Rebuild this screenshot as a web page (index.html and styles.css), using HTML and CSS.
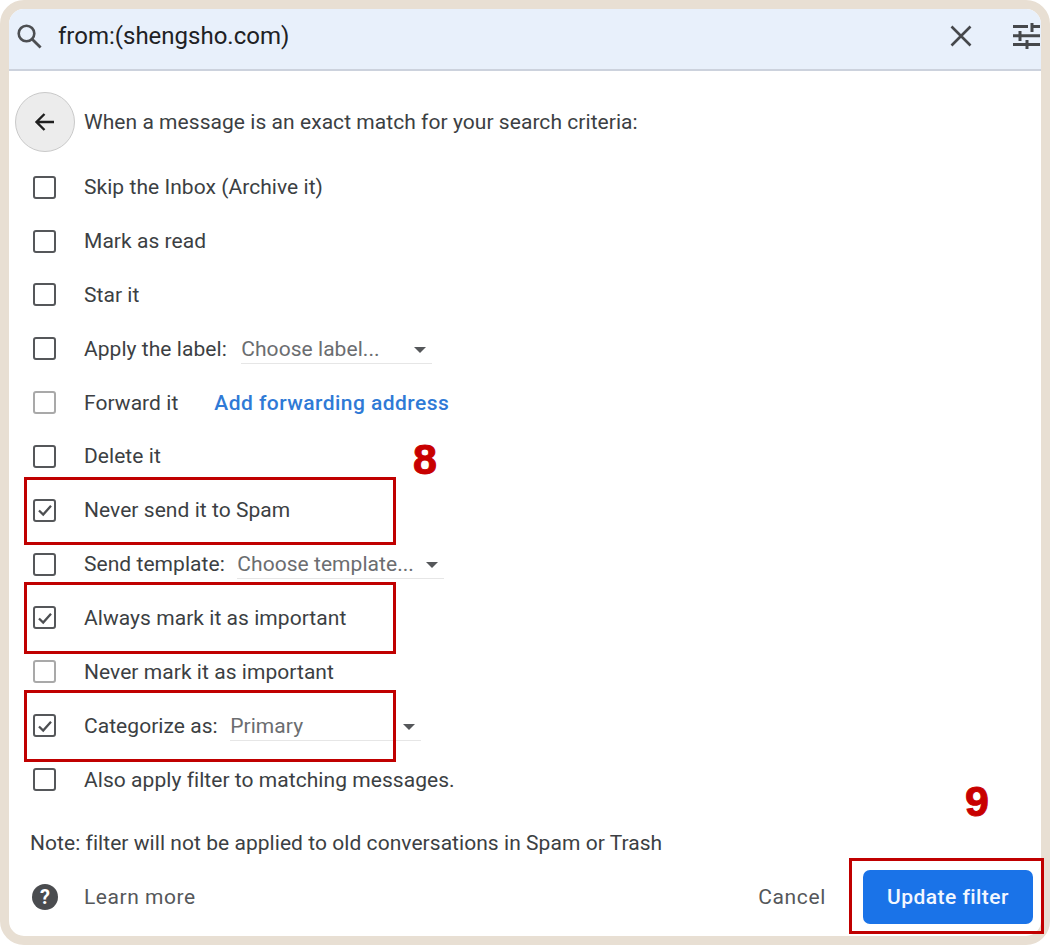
FILE: index.html
```html
<!DOCTYPE html>
<html lang="en">
<head>
<meta charset="utf-8">
<title>Update filter</title>
<link rel="stylesheet" href="styles.css">
</head>
<body>
<div class="page">
  <div class="frame">
    <header class="search">
      <svg class="icon-search" viewBox="0 0 28 28" width="28" height="28"><circle cx="11.5" cy="11.5" r="7.8" fill="none" stroke="#4d4f52" stroke-width="2.6"/><path d="M17.2 17.2 25.6 25.6" stroke="#4d4f52" stroke-width="2.8" fill="none"/></svg>
      <span class="query">from:(shengsho.com)</span>
      <svg class="icon-close" viewBox="0 0 22 22" width="22" height="22"><path d="M1.5 1.5 20.5 20.5M20.5 1.5 1.5 20.5" stroke="#46484b" stroke-width="2.6" fill="none"/></svg>
      <svg class="icon-tune" viewBox="0 0 27 26" width="27" height="26"><path d="M0 3.5H15M19 0V9M19 3.5H27M0 12.7H6M7 8V18M7 12.7H27M0 21.5H14M14 17V26M14 21.5H27" stroke="#46484b" stroke-width="3" fill="none"/></svg>
    </header>
    <div class="heading">
      <span class="back"><svg viewBox="0 0 24 24" width="24" height="24"><path d="M21 12H4M11.5 4 3.5 12 11.5 20" stroke="#1f1f1f" stroke-width="2.4" fill="none"/></svg></span>
      <span class="text">When a message is an exact match for your search criteria:</span>
    </div>
    <ul class="options">
      <li class="row"><span class="box"></span><span class="text">Skip the Inbox (Archive it)</span></li>
      <li class="row"><span class="box"></span><span class="text">Mark as read</span></li>
      <li class="row"><span class="box"></span><span class="text">Star it</span></li>
      <li class="row"><span class="box"></span><span class="text">Apply the label:</span><span class="select select-label">Choose label...</span></li>
      <li class="row"><span class="box box-off"></span><span class="text">Forward it</span><a class="link">Add forwarding address</a></li>
      <li class="row"><span class="box"></span><span class="text">Delete it</span></li>
      <li class="row"><span class="box box-on"><svg viewBox="0 0 18 18" width="18" height="18"><path d="M3 9.5 7.2 13.6 15 4.8" stroke="#4d4f52" stroke-width="2.3" fill="none"/></svg></span><span class="text">Never send it to Spam</span></li>
      <li class="row"><span class="box"></span><span class="text">Send template:</span><span class="select select-template">Choose template...</span></li>
      <li class="row"><span class="box box-on"><svg viewBox="0 0 18 18" width="18" height="18"><path d="M3 9.5 7.2 13.6 15 4.8" stroke="#4d4f52" stroke-width="2.3" fill="none"/></svg></span><span class="text">Always mark it as important</span></li>
      <li class="row"><span class="box box-off"></span><span class="text">Never mark it as important</span></li>
      <li class="row"><span class="box box-on"><svg viewBox="0 0 18 18" width="18" height="18"><path d="M3 9.5 7.2 13.6 15 4.8" stroke="#4d4f52" stroke-width="2.3" fill="none"/></svg></span><span class="text">Categorize as:</span><span class="select select-category">Primary</span></li>
      <li class="row"><span class="box"></span><span class="text">Also apply filter to matching messages.</span></li>
    </ul>
    <p class="note">Note: filter will not be applied to old conversations in Spam or Trash</p>
    <footer class="actions">
      <span class="help">?</span>
      <span class="learn">Learn more</span>
      <span class="cancel">Cancel</span>
      <span class="update">Update filter</span>
    </footer>
  </div>
  <div class="mark mark-spam"></div>
  <div class="mark mark-important"></div>
  <div class="mark mark-category"></div>
  <div class="mark mark-update"></div>
  <div class="step step-8">8</div>
  <div class="step step-9">9</div>
</div>
</body>
</html>
```
FILE: styles.css
```css
* { box-sizing: border-box; }
html, body { margin: 0; padding: 0; background: #fff; }
body { font-family: Roboto, "Liberation Sans", sans-serif; color: #3c3f43; }
.page { position: relative; width: 1050px; height: 945px; overflow: hidden; }
.frame {
  width: 1050px; height: 945px;
  border: 9px solid #e8dfd3;
  border-radius: 24px;
  background: #fff;
  display: flex; flex-direction: column;
  overflow: hidden;
}
.search {
  height: 62px; flex: none;
  background: #e8f0fb;
  border-bottom: 2px solid #ccd2dd;
  display: flex; align-items: center;
  padding: 0 1px 6px 6px;
}
.icon-search { flex: none; }
.query { margin-left: 15px; font-size: 24px; color: #202124; flex: 1; }
.icon-close { flex: none; margin-right: 41px; }
.icon-tune { flex: none; }
.heading { display: flex; align-items: center; margin: 21px 0 8.3px 6px; gap: 9px; }
.back {
  width: 60px; height: 60px; flex: none;
  border-radius: 50%;
  background: #ececec;
  border: 1.5px solid #c9c9c9;
  display: flex; align-items: center; justify-content: center;
}
.text { font-size: 21px; letter-spacing: 0.05px; color: #3c3f43; white-space: nowrap; }
.options { list-style: none; margin: 0; padding: 0 0 0 24px; }
.row { height: 53.85px; display: flex; align-items: center; }
.box {
  width: 23px; height: 23px; flex: none;
  border: 2.8px solid #55575a;
  border-radius: 3px;
  margin-right: 28px;
  display: flex; align-items: center; justify-content: center;
}
.box-off { border-color: #a9a9a9; }
.link { margin-left: 36px; font-size: 21px; letter-spacing: 0.45px; font-weight: 500; color: #2f7ad6; }
.select {
  position: relative;
  height: 29px; line-height: 28px;
  font-size: 21px; letter-spacing: 0.05px; color: #6b6d70;
  border-bottom: 1px solid #e6e6e6;
  margin-top: 1px;
  white-space: nowrap;
}
.select::after {
  content: "";
  position: absolute; right: 6px; top: 12px;
  border-left: 6.5px solid transparent;
  border-right: 6.5px solid transparent;
  border-top: 6px solid #55575a;
}
.select-label { width: 191px; margin-left: 14.5px; }
.select-template { width: 207px; margin-left: 12.5px; }
.select-category { width: 191px; margin-left: 12.5px; }
.note { margin: 21.7px 0 12px 21px; height: 30px; line-height: 30px; font-size: 21px; letter-spacing: 0.05px; color: #3c3f43; }
.actions { display: flex; align-items: center; height: 54px; padding-left: 23px; }
.help {
  width: 26px; height: 26px; flex: none;
  border-radius: 50%;
  background: #4a4c4f; color: #fff;
  font-size: 20px; font-weight: 700; line-height: 26px; text-align: center;
}
.learn { margin-left: 26px; font-size: 21px; letter-spacing: 0.55px; color: #55575a; flex: 1; }
.cancel { font-size: 21px; letter-spacing: 0.65px; color: #55575a; margin-right: 37px; }
.update {
  width: 170px; height: 54px; margin-right: 8px;
  border-radius: 7px;
  background: #1a73e8; color: #f2f7ff;
  font-size: 21px; letter-spacing: 0.45px; font-weight: 500;
  display: flex; align-items: center; justify-content: center;
}
.mark { position: absolute; border: 3px solid #c00000; }
.mark-spam { left: 24px; top: 477px; width: 372px; height: 68px; }
.mark-important { left: 24px; top: 582px; width: 372px; height: 72px; }
.mark-category { left: 24px; top: 690px; width: 372px; height: 72px; }
.mark-update { left: 849px; top: 858px; width: 195px; height: 76px; }
.step {
  position: absolute;
  font-family: "Liberation Sans", Arial, sans-serif;
  font-weight: 700; font-size: 43px; line-height: 44px; color: #c80000;
  -webkit-text-stroke: 1px #c80000;
}
.step-8 { left: 413px; top: 437px; }
.step-9 { left: 965px; top: 779px; }
```
